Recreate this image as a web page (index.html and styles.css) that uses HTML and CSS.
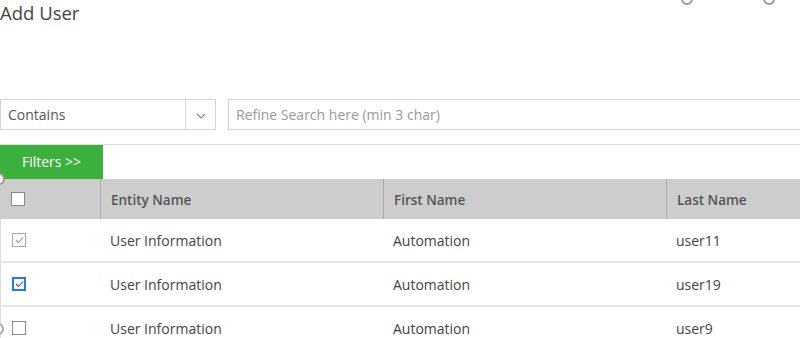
FILE: index.html
```html
<!DOCTYPE html>
<html>
<head>
<meta charset="utf-8">
<link rel="stylesheet" href="styles.css">
</head>
<body>
<div class="page">
  <span class="knob knob-a"></span>
  <span class="knob knob-b"></span>
  <span class="knob knob-c"></span>
  <span class="knob knob-d"></span>
  <h1 class="title">Add User</h1>
  <div class="search-row">
    <div class="select">
      <span class="select-text">Contains</span>
      <span class="select-arrow">
        <svg width="10" height="6" viewBox="0 0 10 6"><path d="M1 1 L5 5 L9 1" fill="none" stroke="#888" stroke-width="1.1"/></svg>
      </span>
    </div>
    <div class="search">Refine Search here (min 3 char)</div>
  </div>
  <div class="filter-row">
    <button class="filters">Filters &gt;&gt;</button>
  </div>
  <div class="table">
    <div class="row head">
      <div class="cell c0"><span class="cb"></span></div>
      <div class="cell c1">Entity Name</div>
      <div class="cell c2">First Name</div>
      <div class="cell c3">Last Name</div>
    </div>
    <div class="row">
      <div class="cell c0"><span class="cb cb-gray"><svg width="9" height="8" viewBox="0 0 9 8"><path d="M1 4 L3.5 6.5 L8 1.5" fill="none" stroke="#999" stroke-width="1.1"/></svg></span></div>
      <div class="cell c1">User Information</div>
      <div class="cell c2">Automation</div>
      <div class="cell c3">user11</div>
    </div>
    <div class="row">
      <div class="cell c0"><span class="cb cb-blue"><svg width="9" height="8" viewBox="0 0 9 8"><path d="M1 4 L3.5 6.5 L8 1.5" fill="none" stroke="#555" stroke-width="1.1"/></svg></span></div>
      <div class="cell c1">User Information</div>
      <div class="cell c2">Automation</div>
      <div class="cell c3">user19</div>
    </div>
    <div class="row">
      <div class="cell c0"><span class="cb"></span></div>
      <div class="cell c1">User Information</div>
      <div class="cell c2">Automation</div>
      <div class="cell c3">user9</div>
    </div>
  </div>
</div>
</body>
</html>
```

FILE: styles.css
```css
* { box-sizing: border-box; }
html, body { margin: 0; padding: 0; background: #fff; overflow: hidden; }
body { font-family: "Open Sans", "Noto Sans", sans-serif; color: #444; }
.page { position: relative; width: 800px; height: 338px; overflow: hidden; }

.knob { position: absolute; width: 12px; height: 12px; border: 2px solid #999; border-radius: 50%; background: #fff; }
.knob-a { left: 681px; top: -7px; }
.knob-b { left: 763px; top: -7px; }
.knob-c { left: -7px; top: 173px; }
.knob-d { left: -8px; top: 323px; border-color: #aaa; }

.title { margin: 0; padding: 0; height: 34px; font-size: 18.5px; font-weight: 400; line-height: 26px; color: #444; }

.search-row { display: flex; gap: 12px; margin-top: 65px; height: 31px; }
.select { display: flex; width: 216px; height: 31px; border: 1px solid #d4d4d4; }
.select-text { flex: 1; padding-left: 7px; font-size: 14px; line-height: 29px; color: #555; border-right: 1px solid #d4d4d4; }
.select-arrow { width: 29px; display: flex; align-items: center; justify-content: center; padding-top: 2px; }
.search { flex: 1; margin-right: -3px; height: 31px; border: 1px solid #d4d4d4; padding-left: 7px; font-size: 14px; line-height: 29px; color: #999; }

.filter-row { margin-top: 14px; border-top: 1px solid #dcdcdc; height: 35px; }
.filters { display: block; width: 103px; height: 34px; border: 0; margin: 0; background: #3cb03c; color: #fff; font-family: inherit; font-size: 14px; padding: 0; line-height: 34px; text-align: center; }

.table { width: 800px; }
.row { display: flex; height: 44px; border-bottom: 2px solid #e4e4e4; border-left: 1px solid #ddd; }
.row.head { height: 40px; background: #cdcdcd; border-bottom: 0; border-left: 0; }
.cell { display: flex; align-items: center; font-size: 14px; color: #444; padding-left: 10px; }
.head .cell { font-weight: 600; color: #555; font-size: 13.5px; border-left: 1px solid #aaa; padding-top: 2px; }
.head .cell.c0 { border-left: 0; padding-top: 0; }
.c0 { width: 100px; padding-left: 11px; }
.row:not(.head) .c0 { width: 99px; }
.c1 { width: 283px; }
.c2 { width: 283px; }
.c3 { flex: 1; }

.cb { width: 14px; height: 14px; border: 1px solid #888; background: #fff; display: flex; align-items: center; justify-content: center; }
.cb-gray { border-color: #aaa; }
.cb-blue { border: 2px solid #1e7fe0; }
```
